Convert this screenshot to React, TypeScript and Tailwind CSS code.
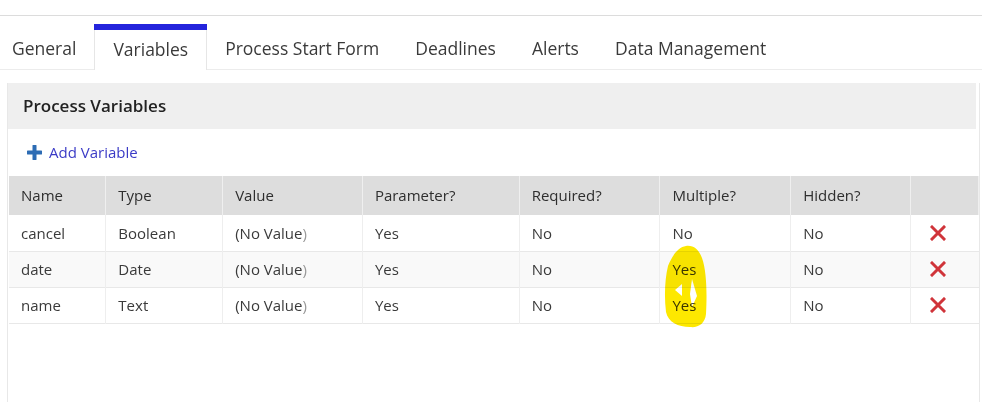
const tabs = ["General", "Variables", "Process Start Form", "Deadlines", "Alerts", "Data Management"];

const columns = [
  { label: "Name", w: "w-[97px]" },
  { label: "Type", w: "w-[117px]" },
  { label: "Value", w: "w-[140px]" },
  { label: "Parameter?", w: "w-[157px]" },
  { label: "Required?", w: "w-[141px]" },
  { label: "Multiple?", w: "w-[131px]" },
  { label: "Hidden?", w: "w-[120px]" },
  { label: "", w: "w-[68px]" },
];

const rows = [
  { name: "cancel", type: "Boolean", param: "Yes", req: "No", multi: "No", hidden: "No" },
  { name: "date", type: "Date", param: "Yes", req: "No", multi: "Yes", hidden: "No" },
  { name: "name", type: "Text", param: "Yes", req: "No", multi: "Yes", hidden: "No" },
];

function RemoveIcon() {
  return (
    <svg width="16" height="16" viewBox="0 0 16 16">
      <path d="M2 2 L14 14 M14 2 L2 14" stroke="#d0343a" strokeWidth="3" strokeLinecap="square" />
    </svg>
  );
}

function PlusIcon() {
  return (
    <svg width="15" height="15" viewBox="0 0 15 15">
      <path d="M7.5 1 V14 M1 7.5 H14" stroke="#2d6cb4" strokeWidth="4" strokeLinecap="round" />
    </svg>
  );
}

export default function App() {
  return (
    <div
      className="relative w-[982px] h-[402px] overflow-hidden bg-white text-[#3a3a3a]"
      style={{ fontFamily: '"Open Sans", "Liberation Sans", sans-serif' }}
    >
      {/* top rule */}
      <div className="h-[16px] border-b border-[#dcdcdc]" />

      {/* tab strip */}
      <div className="flex h-[54px] border-b border-[#ececec] -ml-[6px]">
        {tabs.map((t) =>
          t === "Variables" ? (
            <div key={t} className="mt-[8px] flex flex-col">
              <div className="h-[6px] bg-[#2424dc]" />
              <div className="flex-1 flex items-center pb-[2px] px-[18px] border-x border-[#e6e6e6] bg-white -mb-px text-[17.5px]">
                {t}
              </div>
            </div>
          ) : (
            <div key={t} className="flex items-center pt-[12px] px-[18px] text-[17.5px]">
              {t}
            </div>
          )
        )}
      </div>

      {/* process variables panel */}
      <div className="mt-[13px] ml-[7px] mr-[2px] h-[400px] border-x border-[#e8e8e8]">
        <div className="h-[46px] mr-[3px] bg-[#efefef] flex items-center pl-[15px] text-[17px] font-semibold text-[#222]">
          Process Variables
        </div>

        <div className="h-[47px] flex items-center pl-[19px] gap-[7px] text-[15px] text-[#3b3bc6]">
          <PlusIcon />
          <span>Add Variable</span>
        </div>

        <table className="ml-[1px] border-collapse text-[15px] table-fixed">
          <thead>
            <tr className="h-[39px] bg-[#dddddd]">
              {columns.map((c, i) => (
                <th
                  key={i}
                  className={`${c.w} text-left font-medium text-[#2e2e2e] pl-[12px] border-l border-r border-[#efefef] first:border-l-0`}
                >
                  {c.label}
                </th>
              ))}
            </tr>
          </thead>
          <tbody>
            {rows.map((r, i) => (
              <tr key={r.name} className={`h-[36px] border-b border-[#e8e8e8] ${i === 1 ? "bg-[#f9f9f9]" : "bg-white"}`}>
                <td className="pl-[12px] border-r border-[#eeeeee]">{r.name}</td>
                <td className="pl-[12px] border-r border-[#eeeeee]">{r.type}</td>
                <td className="pl-[12px] border-r border-[#eeeeee]">
                  (No Value<span className="text-[#999]">)</span>
                </td>
                <td className="pl-[12px] border-r border-[#eeeeee]">{r.param}</td>
                <td className="pl-[12px] border-r border-[#eeeeee]">{r.req}</td>
                <td className="pl-[12px] border-r border-[#eeeeee]">{r.multi}</td>
                <td className="pl-[12px] border-r border-[#eeeeee]">{r.hidden}</td>
                <td className="pl-[19px]">
                  <RemoveIcon />
                </td>
              </tr>
            ))}
          </tbody>
        </table>
      </div>

      {/* marker scribble over the Multiple? column */}
      <svg className="absolute left-0 top-0 pointer-events-none mix-blend-multiply" width="982" height="402">
        <path
          d="M686 246 C694 245 699 250 702 258 C707 272 707 296 706 314 C705 324 698 328 690 327 C678 327 668 322 666 312 C664 296 665 278 668 266 C672 256 678 247 686 246 Z"
          fill="#fde800"
        />
        <path d="M682 284 L675 290 L682 296 Z" fill="#ffffff" />
        <path d="M692 279 L697 296 L692 307 L690 294 Z" fill="#ffffff" />
      </svg>
    </div>
  );
}
